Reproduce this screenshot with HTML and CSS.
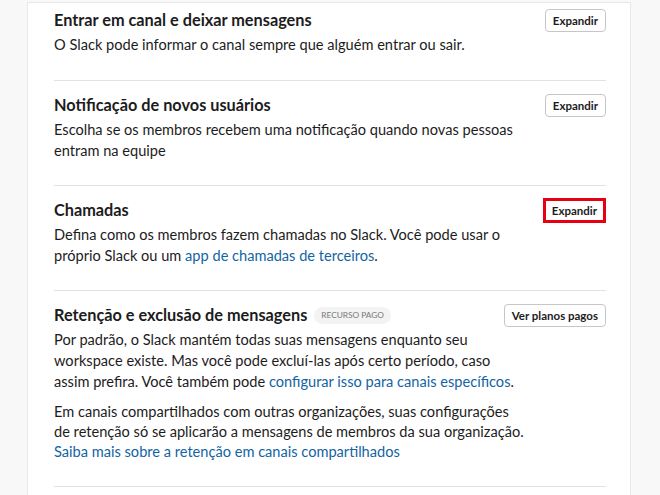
FILE: index.html
```html
<!DOCTYPE html>
<html lang="pt-BR">
<head>
<meta charset="utf-8">
<title>Configurações</title>
<link rel="stylesheet" href="styles.css">
</head>
<body>
<div class="card">
  <section class="section first">
    <div class="head">
      <h3 class="title">Entrar em canal e deixar mensagens</h3>
      <button class="btn">Expandir</button>
    </div>
    <p class="desc">O Slack pode informar o canal sempre que alguém entrar ou sair.</p>
  </section>
  <section class="section">
    <div class="head">
      <h3 class="title">Notificação de novos usuários</h3>
      <button class="btn">Expandir</button>
    </div>
    <p class="desc">Escolha se os membros recebem uma notificação quando novas pessoas entram na equipe</p>
  </section>
  <section class="section">
    <div class="head">
      <h3 class="title">Chamadas</h3>
      <button class="btn highlight">Expandir</button>
    </div>
    <p class="desc">Defina como os membros fazem chamadas no Slack. Você pode usar o próprio Slack ou um <a href="#" class="link">app de chamadas de terceiros</a>.</p>
  </section>
  <section class="section">
    <div class="head">
      <div class="title-group">
        <h3 class="title">Retenção e exclusão de mensagens</h3>
        <span class="badge">Recurso pago</span>
      </div>
      <button class="btn">Ver planos pagos</button>
    </div>
    <p class="desc">Por padrão, o Slack mantém todas suas mensagens enquanto seu workspace existe. Mas você pode excluí-las após certo período, caso assim prefira. Você também pode <a href="#" class="link">configurar isso para canais específicos</a>.</p>
    <p class="desc para">Em canais compartilhados com outras organizações, suas configurações de retenção só se aplicarão a mensagens de membros da sua organização. <a href="#" class="link">Saiba mais sobre a retenção em canais compartilhados</a></p>
  </section>
  <section class="section"></section>
</div>
</body>
</html>
```

FILE: styles.css
```css
* { box-sizing: border-box; }

html, body {
  margin: 0;
  padding: 0;
  background: #f8f8f8;
  height: 100%;
  overflow: hidden;
}

body {
  font-family: Lato, "Noto Sans", sans-serif;
  color: #1d1c1d;
  padding-top: 2px;
}

.card {
  margin-left: 27px;
  width: 604px;
  min-height: 600px;
  background: #ffffff;
  border: 1px solid #e8e8e8;
  border-bottom: none;
  padding: 0 24px 0 26px;
}

.section {
  padding: 12px 0 24px;
  border-top: 1px solid #e2e2e2;
}

.section.first {
  border-top: none;
  padding-top: 5px;
  padding-bottom: 25px;
}

.head {
  display: flex;
  align-items: center;
  justify-content: space-between;
  height: 24px;
  margin-bottom: 2px;
}

.title-group {
  display: flex;
  align-items: center;
  gap: 7px;
}

.title {
  margin: 0;
  font-size: 16.3px;
  font-weight: 700;
  line-height: 24px;
  color: #1d1c1d;
}

.badge {
  display: inline-block;
  height: 17px;
  line-height: 17px;
  padding: 0 7px;
  border-radius: 9px;
  background: #f3f3f3;
  color: #7a797a;
  font-size: 8.3px;
  text-transform: uppercase;
}

.btn {
  height: 23px;
  padding: 0 7px;
  border: 1px solid #c7c6c7;
  border-radius: 4px;
  background: #ffffff;
  font-family: Lato, "Noto Sans", sans-serif;
  font-size: 11.5px;
  font-weight: 700;
  color: #1d1c1d;
  line-height: 21px;
  cursor: pointer;
}

.btn.highlight {
  height: 25px;
  padding: 0 6px;
  border: 3px solid #e60012;
  border-radius: 0;
  line-height: 19px;
}

.desc {
  margin: 0;
  max-width: 472px;
  font-size: 14.6px;
  line-height: 21px;
  color: #1d1c1d;
}

.desc.para {
  margin-top: 10px;
  line-height: 20px;
}

.link {
  color: #1264a3;
  text-decoration: none;
}
```
